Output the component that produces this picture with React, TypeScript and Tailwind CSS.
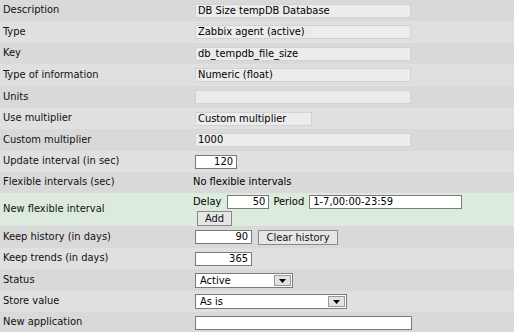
import React from "react";

const font = { fontFamily: '"DejaVu Sans Condensed", "DejaVu Sans", sans-serif' };

function RO({ w, text }: { w: string; text: string }) {
  return (
    <div className={`${w} h-[14px] bg-[#ececec] border border-[#d2d2d2] pl-[2px] leading-[12px] text-[11px] text-black overflow-hidden whitespace-nowrap`}>
      {text}
    </div>
  );
}

function Inp({ w, text, right }: { w: string; text: string; right?: boolean }) {
  return (
    <div className={`${w} h-[14px] bg-white border border-[#7a7a7a] px-[3px] leading-[12px] text-[11px] text-black whitespace-nowrap ${right ? "text-right" : "text-left"}`}>
      {text}
    </div>
  );
}

function Btn({ text, w }: { text: string; w: string }) {
  return (
    <div className={`${w} h-[15px] bg-[#e6e6e6] border border-[#888] flex items-center justify-center text-[11px] text-[#111] leading-[13px]`}>
      {text}
    </div>
  );
}

function Sel({ w, text }: { w: string; text: string }) {
  return (
    <div className={`${w} h-[15px] bg-white border border-[#7a7a7a] flex items-stretch text-[11px] leading-[13px]`}>
      <div className="flex-1 pl-[4px] flex items-center">{text}</div>
      <div className="w-[17px] m-[1px] bg-[#e2e2e2] border border-[#999] flex items-end justify-center pb-[2px]">
        <svg width="7" height="4" viewBox="0 0 7 4"><path d="M0 0h7L3.5 4z" fill="#000" /></svg>
      </div>
    </div>
  );
}

function Row({ label, h, bg, children }: { label: string; h: string; bg: string; children: React.ReactNode }) {
  return (
    <div className={`flex items-center ${h} ${bg}`}>
      <div className="w-[195px] pl-[3px] text-[11px] text-[#111]">{label}</div>
      <div className="flex-1">{children}</div>
    </div>
  );
}

export default function App() {
  const D = "bg-[#d9d9d9]";
  const L = "bg-[#e0e0e0]";
  return (
    <div className="w-[514px] h-[332px] overflow-hidden" style={font}>
      <Row label="Description" h="h-[21px]" bg={D}><RO w="w-[216px]" text="DB Size tempDB Database" /></Row>
      <Row label="Type" h="h-[22px]" bg={L}><RO w="w-[216px]" text="Zabbix agent (active)" /></Row>
      <Row label="Key" h="h-[21px]" bg={D}><RO w="w-[216px]" text="db_tempdb_file_size" /></Row>
      <Row label="Type of information" h="h-[22px]" bg={L}><RO w="w-[216px]" text="Numeric (float)" /></Row>
      <Row label="Units" h="h-[22px]" bg={D}><RO w="w-[216px]" text="" /></Row>
      <Row label="Use multiplier" h="h-[21px]" bg={L}><RO w="w-[117px]" text="Custom multiplier" /></Row>
      <Row label="Custom multiplier" h="h-[22px]" bg={D}><RO w="w-[216px]" text="1000" /></Row>
      <Row label="Update interval (in sec)" h="h-[21px]" bg={L}><Inp w="w-[42px]" text="120" right /></Row>
      <Row label="Flexible intervals (sec)" h="h-[21px]" bg={D}>
        <div className="text-[11px] -ml-[2px]">No flexible intervals</div>
      </Row>
      <div className="flex items-center h-[33px] bg-[#dcebdc]">
        <div className="w-[195px] pl-[3px] text-[11px] text-[#111]">New flexible interval</div>
        <div className="flex flex-col gap-[1px] pt-[1px]">
          <div className="flex items-center text-[11px]">
            <span className="mr-[6px] -ml-[2px]">Delay</span>
            <Inp w="w-[42px]" text="50" right />
            <span className="ml-[4px] mr-[5px]">Period</span>
            <Inp w="w-[153px]" text="1-7,00:00-23:59" />
          </div>
          <div className="pl-[2px]"><Btn w="w-[35px]" text="Add" /></div>
        </div>
      </div>
      <Row label="Keep history (in days)" h="h-[22px]" bg={D}>
        <div className="flex items-center gap-[6px]">
          <Inp w="w-[57px]" text="90" right />
          <Btn w="w-[80px]" text="Clear history" />
        </div>
      </Row>
      <Row label="Keep trends (in days)" h="h-[21px]" bg={L}><Inp w="w-[57px]" text="365" right /></Row>
      <Row label="Status" h="h-[22px]" bg={D}><Sel w="w-[98px]" text="Active" /></Row>
      <Row label="Store value" h="h-[21px]" bg={L}><Sel w="w-[152px]" text="As is" /></Row>
      <Row label="New application" h="h-[21px]" bg={D}><Inp w="w-[217px]" text="" /></Row>
    </div>
  );
}
